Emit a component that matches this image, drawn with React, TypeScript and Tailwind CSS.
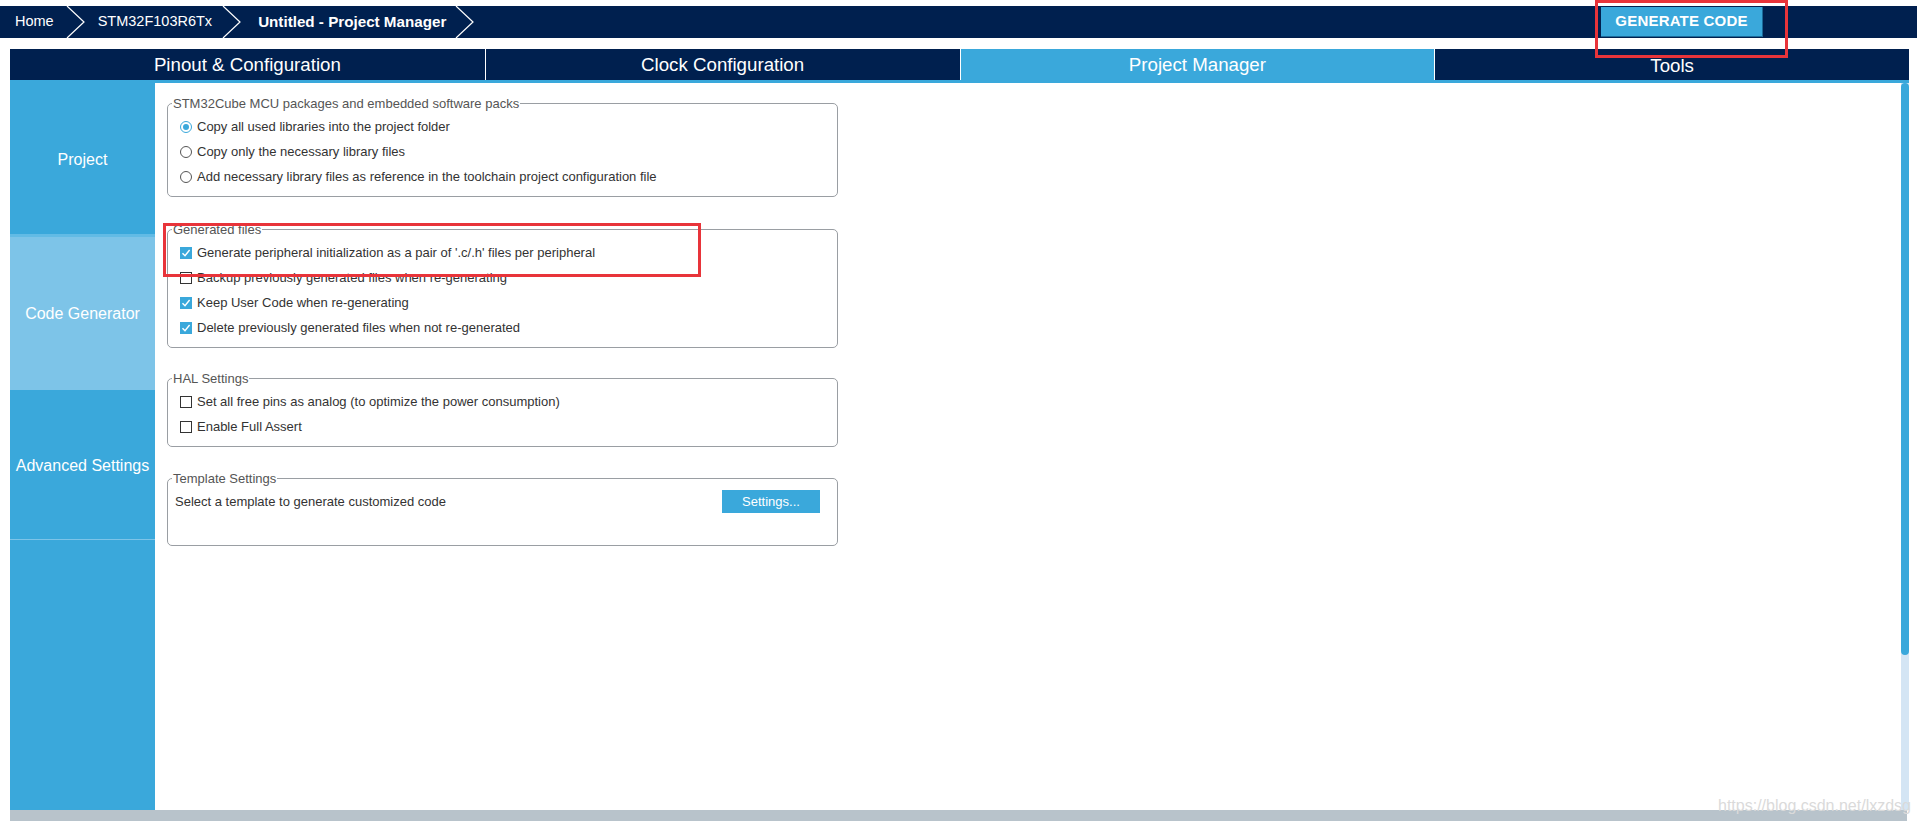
import React from "react";

const NAVY = "bg-[#00204f]";

function Chevron() {
  return (
    <svg width="19" height="32" viewBox="0 0 19 32" className="shrink-0">
      <polyline points="1,0 18,16 1,32" fill="none" stroke="#ffffff" strokeWidth="1.2" />
    </svg>
  );
}

function Radio({ checked }: { checked?: boolean }) {
  return (
    <span
      className={
        "w-[12px] h-[12px] rounded-full border flex items-center justify-center shrink-0 bg-white " +
        (checked ? "border-[#3aa8db]" : "border-[#555555]")
      }
    >
      {checked && <span className="w-[6px] h-[6px] rounded-full bg-[#3aa8db]" />}
    </span>
  );
}

function Check({ checked }: { checked?: boolean }) {
  if (checked) {
    return (
      <span className="w-[12px] h-[12px] bg-[#3aa8db] flex items-center justify-center shrink-0">
        <svg width="10" height="10" viewBox="0 0 10 10">
          <polyline points="1.5,5.2 4,7.8 8.6,2" fill="none" stroke="#ffffff" strokeWidth="1.4" />
        </svg>
      </span>
    );
  }
  return <span className="w-[12px] h-[12px] border border-[#333333] bg-white shrink-0" />;
}

function Row({ control, label }: { control: React.ReactNode; label: string }) {
  return (
    <div className="h-[25px] flex items-center gap-[5px]">
      {control}
      <span className="text-[13px] text-[#333333] whitespace-nowrap">{label}</span>
    </div>
  );
}

function Group({
  title,
  children,
  className = "",
}: {
  title: string;
  children: React.ReactNode;
  className?: string;
}) {
  return (
    <fieldset
      className={
        "w-[671px] border border-[#9a9ea3] rounded-[5px] pl-[12px] pr-[12px] " + className
      }
    >
      <legend className="-ml-[8px] px-[1px] text-[13px] leading-[15px] text-[#555555]">
        {title}
      </legend>
      {children}
    </fieldset>
  );
}

export default function App() {
  return (
    <div className="w-[1917px] h-[821px] bg-white relative overflow-hidden font-['Liberation_Sans',Arial,sans-serif]">
      <div className="h-[6px]" />
      {/* Breadcrumb bar */}
      <header className={`h-[32px] ${NAVY} flex items-center text-white`}>
        <div className="flex items-center pl-[15px]">
          <span className="text-[14.5px]">Home</span>
          <span className="ml-[12px] mr-[13px] flex"><Chevron /></span>
          <span className="text-[14.5px]">STM32F103R6Tx</span>
          <span className="ml-[10px] mr-[17px] flex"><Chevron /></span>
          <span className="text-[15.2px] font-bold">Untitled - Project Manager</span>
          <span className="ml-[9px] flex"><Chevron /></span>
        </div>
        <button className="ml-auto mr-[154px] w-[162px] h-[30px] bg-[#3aa8db] border-b border-r border-[#1b6a99] text-white text-[15px] font-bold tracking-[0.2px]">
          GENERATE CODE
        </button>
      </header>
      <div className="h-[11px]" />

      <div className="ml-[10px] w-[1899px]">
        {/* Tabs */}
        <div className="grid grid-cols-4 h-[29px] text-white text-[18.7px]">
          <div className={`${NAVY} flex items-center justify-center`}>Pinout &amp; Configuration</div>
          <div className={`${NAVY} border-l border-white flex items-center justify-center`}>Clock Configuration</div>
          <div className="bg-[#3aa8db] border-l border-white flex items-center justify-center">Project Manager</div>
          <div className={`${NAVY} border-l border-white flex items-center justify-center pt-[3px]`}>Tools</div>
        </div>
        <div className="h-[5px] bg-[#3aa8db]" />

        {/* Main */}
        <div className="flex h-[727px]">
          {/* Sidebar */}
          <nav className="w-[145px] bg-[#3aa8db] flex flex-col text-white text-[16px]">
            <div className="h-[151px] flex items-center justify-center pt-[3px]">Project</div>
            <div className="h-[3px] bg-[#62bbe5]" />
            <div className="h-[153px] bg-[#7dc4e8] flex items-center justify-center">Code Generator</div>
            <div className="h-[149px] flex items-center justify-center whitespace-nowrap pt-[3px]">Advanced Settings</div>
            <div className="h-[1px] bg-[#7dc4e8]" />
          </nav>

          {/* Content */}
          <main className="flex-1 bg-white pl-[12px] pt-[13px]">
            <Group title="STM32Cube MCU packages and embedded software packs" className="pt-[3px] pb-[7px]">
              <Row control={<Radio checked />} label="Copy all used libraries into the project folder" />
              <Row control={<Radio />} label="Copy only the necessary library files" />
              <Row control={<Radio />} label="Add necessary library files as reference in the toolchain project configuration file" />
            </Group>

            <Group title="Generated files" className="mt-[25px] pt-[3px] pb-[7px]">
              <Row control={<Check checked />} label="Generate peripheral initialization as a pair of '.c/.h' files per peripheral" />
              <Row control={<Check />} label="Backup previously generated files when re-generating" />
              <Row control={<Check checked />} label="Keep User Code when re-generating" />
              <Row control={<Check checked />} label="Delete previously generated files when not re-generated" />
            </Group>

            <Group title="HAL Settings" className="mt-[23px] pt-[3px] pb-[7px]">
              <Row control={<Check />} label="Set all free pins as analog (to optimize the power consumption)" />
              <Row control={<Check />} label="Enable Full Assert" />
            </Group>

            <fieldset className="mt-[24px] w-[671px] border border-[#9a9ea3] rounded-[5px] pl-[7px] pr-[17px] pt-[4px] pb-[32px]">
              <legend className="-ml-[3px] px-[1px] text-[13px] leading-[15px] text-[#555555]">
                Template Settings
              </legend>
              <div className="h-[23px] flex items-center">
                <span className="text-[13px] text-[#333333]">Select a template to generate customized code</span>
                <button className="ml-auto w-[98px] h-[23px] bg-[#3aa8db] text-white text-[13px]">
                  Settings...
                </button>
              </div>
            </fieldset>
          </main>

          {/* Scrollbar */}
          <div className="w-[8px] flex flex-col bg-[#d4e5f4]">
            <div className="h-[572px] bg-[#3aa8db] rounded-[4px]" />
          </div>
        </div>

        <div className="h-[11px] w-[1897px] bg-[#b8c3cb]" />
      </div>

      {/* Annotations */}
      <div className="absolute left-[163px] top-[223px] w-[538px] h-[54px] border-[3px] border-[#e8343a] pointer-events-none" />
      <div className="absolute left-[1595px] top-0 w-[193px] h-[58px] border-[3px] border-[#e8343a] pointer-events-none" />
      <div className="absolute left-[1718px] top-[794px] text-[16px] text-[#dadada] whitespace-nowrap">
        https://blog.csdn.net/lxzdsg
      </div>
    </div>
  );
}
